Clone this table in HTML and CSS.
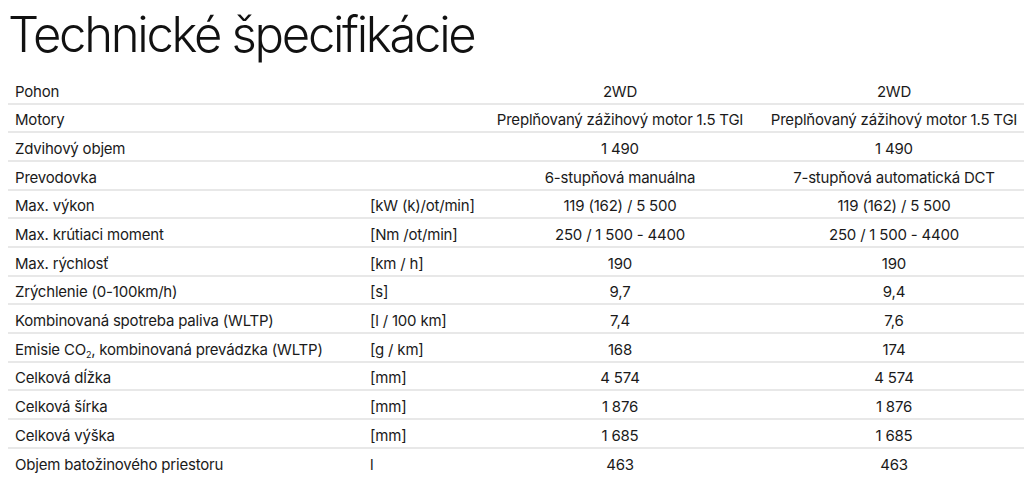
FILE: index.html
```html
<!DOCTYPE html>
<html lang="sk">
<head>
<meta charset="utf-8">
<title>Technické špecifikácie</title>
<link rel="stylesheet" href="styles.css">
</head>
<body>
<h1 class="title">Technické špecifikácie</h1>
<div class="spec">
  <div class="row"><div class="label">Pohon</div><div class="unit"></div><div class="val">2WD</div><div class="val">2WD</div></div>
  <div class="row"><div class="label">Motory</div><div class="unit"></div><div class="val">Preplňovaný zážihový motor 1.5 TGI</div><div class="val">Preplňovaný zážihový motor 1.5 TGI</div></div>
  <div class="row"><div class="label">Zdvihový objem</div><div class="unit"></div><div class="val">1 490</div><div class="val">1 490</div></div>
  <div class="row"><div class="label">Prevodovka</div><div class="unit"></div><div class="val">6-stupňová manuálna</div><div class="val">7-stupňová automatická DCT</div></div>
  <div class="row"><div class="label">Max. výkon</div><div class="unit">[kW (k)/ot/min]</div><div class="val">119 (162) / 5 500</div><div class="val">119 (162) / 5 500</div></div>
  <div class="row"><div class="label">Max. krútiaci moment</div><div class="unit">[Nm /ot/min]</div><div class="val">250 / 1 500 - 4400</div><div class="val">250 / 1 500 - 4400</div></div>
  <div class="row"><div class="label">Max. rýchlosť</div><div class="unit">[km / h]</div><div class="val">190</div><div class="val">190</div></div>
  <div class="row"><div class="label">Zrýchlenie (0-100km/h)</div><div class="unit">[s]</div><div class="val">9,7</div><div class="val">9,4</div></div>
  <div class="row"><div class="label">Kombinovaná spotreba paliva (WLTP)</div><div class="unit">[l / 100 km]</div><div class="val">7,4</div><div class="val">7,6</div></div>
  <div class="row"><div class="label">Emisie CO<sub class="sub">2</sub>, kombinovaná prevádzka (WLTP)</div><div class="unit">[g / km]</div><div class="val">168</div><div class="val">174</div></div>
  <div class="row"><div class="label">Celková dĺžka</div><div class="unit">[mm]</div><div class="val">4 574</div><div class="val">4 574</div></div>
  <div class="row"><div class="label">Celková šírka</div><div class="unit">[mm]</div><div class="val">1 876</div><div class="val">1 876</div></div>
  <div class="row"><div class="label">Celková výška</div><div class="unit">[mm]</div><div class="val">1 685</div><div class="val">1 685</div></div>
  <div class="row"><div class="label">Objem batožinového priestoru</div><div class="unit">l</div><div class="val">463</div><div class="val">463</div></div>
</div>
</body>
</html>
```
FILE: styles.css
```css
html, body {
  overflow: hidden;
}
body {
  margin: 0;
  padding: 0 0 0 8px;
  background: #fff;
  color: #1a1a1a;
  font-family: Inter, "Noto Sans", sans-serif;
}
.title {
  margin: 0;
  padding-top: 5px;
  height: 72px;
  box-sizing: border-box;
  font-size: 49px;
  font-weight: 300;
  letter-spacing: -2.3px;
  line-height: 60px;
  color: #111;
}
.spec {
  width: 1030px;
}
.row {
  display: grid;
  grid-template-columns: 355px 119px 276px 272px;
  height: 28.67px;
  box-sizing: border-box;
  align-items: center;
  border-bottom: 2px solid #e8e8e8;
  font-size: 15px;
  letter-spacing: -0.2px;
  padding-top: 4px;
}
.row:first-child {
  margin-top: 4px;
}
.row:last-child {
  border-bottom: none;
}
.label {
  padding-left: 7px;
  white-space: nowrap;
}
.unit {
  padding-left: 7px;
  white-space: nowrap;
}
.val {
  text-align: center;
  white-space: nowrap;
}
.sub {
  font-size: 9px;
  vertical-align: -3px;
  line-height: 0;
}
```
